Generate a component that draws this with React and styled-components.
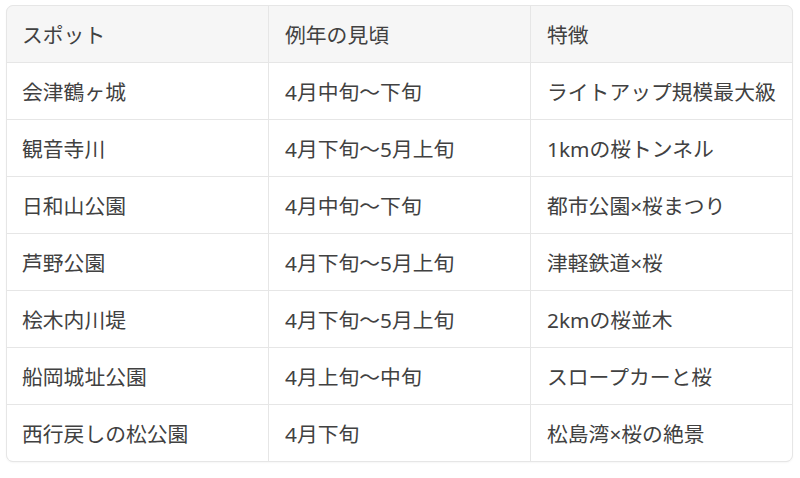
import React from "react";
import styled, { createGlobalStyle } from "styled-components";

const Global = createGlobalStyle`
  html, body { margin: 0; padding: 0; background: #ffffff; }
  body { font-family: "Noto Sans", "Noto Sans CJK JP", sans-serif; }
`;

const Page = styled.div`
  padding: 5px 0 0 6px;
  width: 800px;
  height: 478px;
  box-sizing: border-box;
`;

const Table = styled.div`
  width: 787px;
  display: grid;
  grid-template-columns: 261px 261px 261px;
  column-gap: 1px;
  row-gap: 1px;
  background: #e6e6e6;
  border: 1px solid #e6e6e6;
  border-radius: 7px;
  overflow: hidden;
  box-sizing: border-box;
  box-shadow: 0 1px 2px rgba(0, 0, 0, 0.04);
`;

const Cell = styled.div`
  height: 56px;
  display: flex;
  align-items: center;
  padding-left: ${(p) => (p.$col === 0 ? 15 : 16)}px;
  background: ${(p) => (p.$head ? "#f6f6f6" : "#ffffff")};
  color: #414141;
  font-family: "Noto Sans", "Noto Sans CJK JP", sans-serif;
  font-size: 20.8px;
  font-weight: 400;
  white-space: nowrap;
`;

const head = ["スポット", "例年の見頃", "特徴"];
const rows = [
  ["会津鶴ヶ城", "4月中旬〜下旬", "ライトアップ規模最大級"],
  ["観音寺川", "4月下旬〜5月上旬", "1kmの桜トンネル"],
  ["日和山公園", "4月中旬〜下旬", "都市公園×桜まつり"],
  ["芦野公園", "4月下旬〜5月上旬", "津軽鉄道×桜"],
  ["桧木内川堤", "4月下旬〜5月上旬", "2kmの桜並木"],
  ["船岡城址公園", "4月上旬〜中旬", "スロープカーと桜"],
  ["西行戻しの松公園", "4月下旬", "松島湾×桜の絶景"],
];

export default function App() {
  return (
    <>
      <Global />
      <Page>
        <Table>
          {head.map((h, i) => (
            <Cell key={"h" + i} $head $col={i}>
              {h}
            </Cell>
          ))}
          {rows.map((r, ri) =>
            r.map((c, ci) => (
              <Cell key={ri + "-" + ci} $col={ci}>
                {c}
              </Cell>
            ))
          )}
        </Table>
      </Page>
    </>
  );
}
